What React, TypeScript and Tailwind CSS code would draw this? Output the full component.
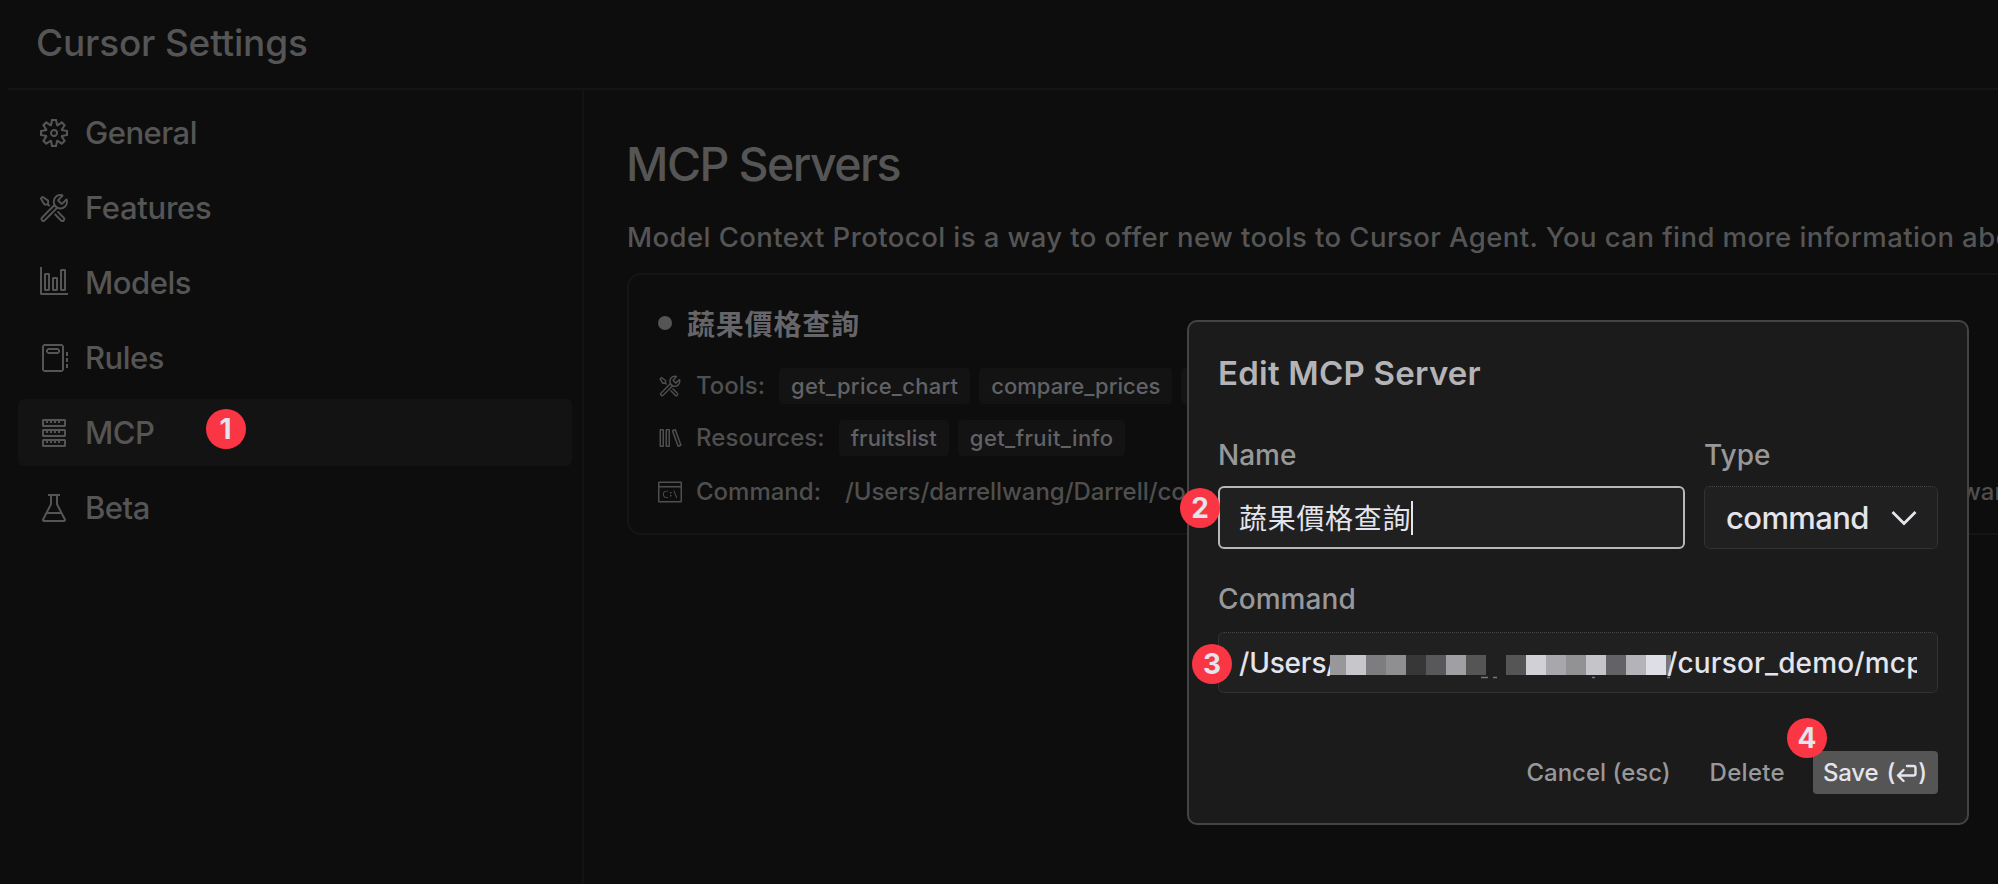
import React from "react";
import {
  VscSettingsGear,
  VscTools,
  VscGraph,
  VscNotebook,
  VscServer,
  VscBeaker,
  VscLibrary,
  VscTerminalCmd,
} from "react-icons/vsc";
import type { IconType } from "react-icons";

type NavItem = { label: string; icon: IconType; active?: boolean; iconClass?: string; textClass?: string };

const NAV: NavItem[] = [
  { label: "General", icon: VscSettingsGear, iconClass: "mx-[2px] size-7" },
  { label: "Features", icon: VscTools, textClass: "tracking-[-0.3px]" },
  { label: "Models", icon: VscGraph },
  { label: "Rules", icon: VscNotebook },
  { label: "MCP", icon: VscServer, active: true },
  { label: "Beta", icon: VscBeaker },
];

// Pixelated blocks that hide the private part of the path: [x, width, colour]
const BLOCKS: [number, number, string][] = [
  [0, 16, "#98989b"],
  [16, 20, "#c6c6cb"],
  [36, 20, "#7d7d80"],
  [56, 20, "#8f8f92"],
  [76, 20, "#373737"],
  [96, 20, "#58585a"],
  [116, 20, "#a0a0a4"],
  [136, 20, "#555555"],
  [176, 20, "#555555"],
  [196, 20, "#d0d0d6"],
  [216, 20, "#a8a8ac"],
  [236, 20, "#929295"],
  [256, 20, "#c4c4c9"],
  [276, 20, "#636365"],
  [296, 20, "#b4b4b8"],
  [316, 20, "#dedee6"],
  [336, 5, "#77777a"],
];

function Badge({ n, className }: { n: number; className: string }) {
  return (
    <span
      className={`absolute flex size-10 items-center justify-center rounded-full bg-[#fb3644] text-[28px] leading-none font-bold text-[#e4e4ec] ${className}`}
    >
      {n}
    </span>
  );
}

function Chip({ children, className = "tracking-[0.25px]" }: { children: React.ReactNode; className?: string }) {
  return (
    <span
      className={`flex h-9 items-center rounded bg-[#131313] px-3 text-[22px] leading-none text-[#626266] ${className}`}
    >
      {children}
    </span>
  );
}

function Sidebar() {
  return (
    <nav className="flex w-[584px] shrink-0 flex-col gap-2 border-r-2 border-[#131313] pt-[9px] pr-2.5 pl-[18px]">
      {NAV.map(({ label, icon: Icon, active, iconClass = "size-8", textClass = "tracking-[-0.5px]" }) => (
        <div
          key={label}
          className={`relative flex h-[67px] items-center rounded-md pl-[19.5px] text-[31px] leading-none text-[#555] ${active ? "bg-[#131313]" : ""}`}
        >
          <Icon className={`shrink-0 ${iconClass}`} />
          <span className={`ml-[15.5px] ${textClass}`}>{label}</span>
          {active && <Badge n={1} className="top-2.5 left-[187.5px] tracking-normal" />}
        </div>
      ))}
    </nav>
  );
}

function ServerCard() {
  return (
    <section className="mt-4 h-[262px] w-[1500px] rounded-[14px] border-2 border-[#151515] px-[29px] pt-7 text-[24px] leading-none whitespace-nowrap text-[#4f4f4f]">
      <div className="flex h-10 items-center">
        <span className="size-3.5 rounded-full bg-[#555]" />
        <h2 className="ml-[15px] font-['Noto_Sans_CJK_TC',sans-serif] text-[28px] leading-10 font-bold tracking-[0.8px] text-[#66666a]">
          蔬果價格查詢
        </h2>
      </div>
      <div className="mt-[25px] flex flex-col gap-4">
        <div className="flex h-9 items-center">
          <VscTools className="size-6" />
          <span className="mr-3.5 ml-[14px]">Tools:</span>
          <div className="flex gap-[9px]">
            <Chip>get_price_chart</Chip>
            <Chip className="tracking-normal">compare_prices</Chip>
            <Chip>get_price_trend</Chip>
          </div>
        </div>
        <div className="flex h-9 items-center">
          <VscLibrary className="size-6" />
          <span className="mr-3.5 ml-[14px] tracking-[0.05px]">Resources:</span>
          <div className="flex gap-[9px]">
            <Chip className="tracking-[0.1px]">fruitslist</Chip>
            <Chip className="tracking-[0.4px]">get_fruit_info</Chip>
          </div>
        </div>
        <div className="flex h-9 items-center pt-1">
          <VscTerminalCmd className="size-6" />
          <span className="ml-[14px]">Command:</span>
          <span className="ml-6 w-[1116px] shrink-0 overflow-hidden leading-9 tracking-[-0.05px]">
            /Users/darrellwang/Darrell/code
          </span>
          <span className="leading-9">wang</span>
        </div>
      </div>
    </section>
  );
}

function EditDialog() {
  return (
    <div
      role="dialog"
      className="absolute top-[320px] left-[1187px] flex h-[505px] w-[782px] flex-col rounded-[10px] border-2 border-[#444] bg-[#1b1b1b] px-[29px] pt-[29px] text-[28px] text-[#98989b]"
    >
      <h2 className="text-[33px] leading-[44px] font-semibold tracking-[0.23px] text-[#b4b4b8]">
        Edit MCP Server
      </h2>
      <div className="mt-10 flex gap-[19px]">
        <div className="w-[467px]">
          <div className="h-[51px] leading-10">Name</div>
          <div className="flex h-[63px] items-center rounded-md border-2 border-[#b8b8bc] bg-[#202020] pl-[19px] font-['Noto_Sans_CJK_TC',sans-serif] text-[28px] font-normal tracking-[0.7px] text-[#e4e4ec]">
            <span className="pb-0.5 leading-10">蔬果價格查詢</span>
            <span className="h-[34px] w-0.5 bg-[#e4e4ec]" />
          </div>
        </div>
        <div className="w-[234px]">
          <div className="h-[51px] leading-10">Type</div>
          <div className="flex h-[63px] items-center justify-between rounded-md border border-dotted border-[#444] bg-[#202020] pr-5 pl-[21px] text-[31px] leading-none tracking-[-0.6px] text-[#e4e4ec]">
            command
            <svg width="26" height="16" viewBox="0 0 26 16" fill="none" stroke="currentColor" strokeWidth="2.8">
              <path d="M1.5 2 L13 13.5 L24.5 2" />
            </svg>
          </div>
        </div>
      </div>
      <div className="mt-[30px] h-[53px] leading-10 tracking-[0.1px]">Command</div>
      <div className="relative flex h-[61px] items-stretch rounded-md border border-dotted border-[#444] bg-[#202020] pr-5 pl-5 leading-[60px] whitespace-nowrap text-[#e4e4ec]">
        <Badge n={3} className="top-[11px] -left-[27px]" />
        <span className="h-[59px] w-[91px] shrink-0 overflow-hidden tracking-[-0.2px]">/Users/</span>
        <svg width="341" height="59" className="shrink-0">
          {BLOCKS.map(([x, w, fill]) => (
            <rect key={x} x={x} y={22} width={w} height={20} fill={fill} />
          ))}
          <path d="M151 44.5h7M163 44.5h4M262 44.5h3M337 44.5h3" stroke="#77777a" strokeWidth="1.4" />
        </svg>
        <span className="-ml-1 h-[59px] min-w-0 flex-1 overflow-hidden tracking-[0.15px]">/cursor_demo/mcp</span>
      </div>
      <div className="relative mt-[58px] flex h-[43px] items-center justify-end text-[24px] leading-none">
        <span>Cancel (esc)</span>
        <span className="ml-[39px] tracking-[0.3px]">Delete</span>
        <button className="ml-7 flex h-[43px] w-[125px] items-center rounded bg-[#555] pl-2.5 text-[#e4e4ec]">
          <span className="tracking-[-0.2px]">Save</span>
          <span className="ml-2">(</span>
          <svg width="21" height="18" viewBox="0 0 21 18" fill="none" stroke="currentColor" strokeWidth="2.4" strokeLinecap="round" strokeLinejoin="round" className="mx-px">
            <path d="M11 2H17.5Q19.5 2 19.5 4V9.5Q19.5 11.5 17.5 11.5H2M7.5 6L2 11.5L7.5 17" />
          </svg>
          <span>)</span>
        </button>
        <Badge n={4} className="-top-[33px] left-[569px]" />
      </div>
      <Badge n={2} className="top-[166px] -left-[9px]" />
    </div>
  );
}

export default function App() {
  return (
    <div className="relative flex h-[884px] w-[1998px] flex-col overflow-hidden bg-[#0d0d0d] font-['Inter',sans-serif] [font-weight:450]">
      <header className="h-[88px] shrink-0 pt-[23px] pl-9 text-[37px] leading-10 tracking-[-0.18px] text-[#555]">
        Cursor Settings
      </header>
      <div className="ml-2 h-0.5 shrink-0 bg-[#151515]" />
      <div className="flex min-h-0 flex-1">
        <Sidebar />
        <main className="min-w-0 flex-1 overflow-hidden pt-[44px] pl-[43px] whitespace-nowrap text-[#555]">
          <h1 className="-ml-px text-[46.5px] leading-[60px] font-[450] tracking-[-1.55px]">MCP Servers</h1>
          <p className="mt-[23px] text-[27.5px] leading-10 tracking-[0.43px]">
            Model Context Protocol is a way to offer new tools to Cursor Agent. You can find more information about
          </p>
          <ServerCard />
        </main>
      </div>
      <EditDialog />
    </div>
  );
}
